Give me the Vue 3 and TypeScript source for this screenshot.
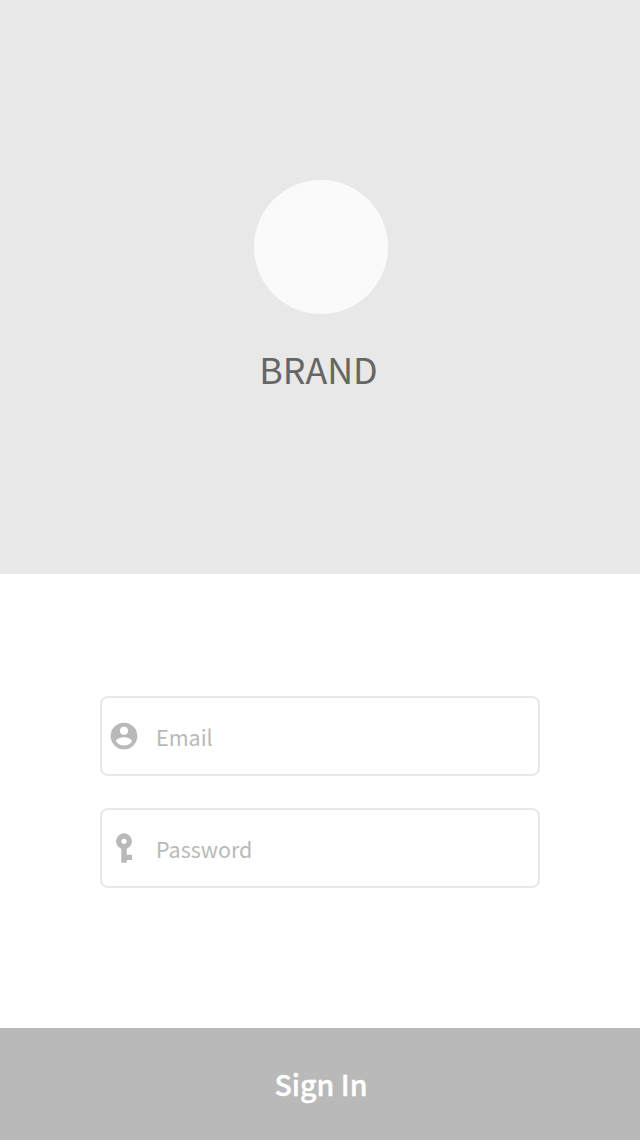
<script setup lang="ts">
import { ref } from 'vue'

const email = ref('')
const password = ref('')
</script>

<template>
  <main class="screen">
    <header class="hero">
      <div class="logo"></div>
      <h1 class="brand">BRAND</h1>
    </header>
    <form class="form" @submit.prevent>
      <label class="field">
        <svg class="icon" viewBox="0 0 32 32">
          <path fill="#b9b9b9" d="M16 2.7a13.3 13.3 0 1 0 0 26.6 13.3 13.3 0 0 0 0-26.6Zm0 4a4 4 0 1 1 0 8 4 4 0 0 1 0-8Zm0 18.9a9.6 9.6 0 0 1-8-4.3c0-2.6 5.3-4.1 8-4.1s8 1.5 8 4.1a9.6 9.6 0 0 1-8 4.3Z" />
        </svg>
        <input v-model="email" class="input" type="text" placeholder="Email" />
      </label>
      <label class="field">
        <svg class="icon" viewBox="0 0 32 32">
          <path fill="#b9b9b9" fill-rule="evenodd" d="M16 1.3a8 8 0 0 0-2.7 15.5v13.9h5.4V28H24v-5.3h-5.3v-5.9A8 8 0 0 0 16 1.3Zm0 5.4a2.6 2.6 0 1 1 0 5.2 2.6 2.6 0 0 1 0-5.2Z" />
        </svg>
        <input v-model="password" class="input" type="password" placeholder="Password" />
      </label>
    </form>
    <button class="submit" type="button">Sign In</button>
  </main>
</template>

<style scoped>
.screen {
  display: flex;
  flex-direction: column;
  width: 640px;
  height: 1140px;
  background: #fff;
  font-family: "Noto Sans CJK SC", "Noto Sans CJK JP", sans-serif;
}
.hero {
  display: flex;
  flex-direction: column;
  align-items: center;
  box-sizing: border-box;
  height: 574px;
  padding-top: 180px;
  background: #e8e8e8;
}
.logo {
  width: 134px;
  height: 134px;
  margin-left: 2px;
  border-radius: 50%;
  background: #fafafa;
}
.brand {
  margin: 24px 3px 0 0;
  color: #666;
  font-size: 35.8px;
  font-weight: 400;
  line-height: 60px;
}
.form {
  display: flex;
  flex: 1;
  flex-direction: column;
  gap: 32px;
  padding: 122px 100px 0;
}
.field {
  display: flex;
  align-items: center;
  box-sizing: border-box;
  height: 80px;
  padding: 0 6px;
  border: 2px solid #e8e8e8;
  border-radius: 8px;
}
.icon {
  flex: none;
  width: 32px;
  height: 32px;
}
.input {
  flex: 1;
  min-width: 0;
  height: 36px;
  margin: 2px 0 0 16px;
  padding: 0;
  border: 0;
  outline: 0;
  background: transparent;
  color: #666;
  font: 400 21.5px/36px "Noto Sans CJK SC", sans-serif;
}
.input::placeholder {
  color: #b9b9b9;
  opacity: 1;
}
.submit {
  height: 112px;
  padding: 0 0 0 2px;
  border: 0;
  background: #b9b9b9;
  color: #fff;
  font: 500 28.6px/48px "Noto Sans CJK SC", sans-serif;
  -webkit-text-stroke: 0.4px #fff;
}
</style>

<style>
body {
  margin: 0;
}
</style>
